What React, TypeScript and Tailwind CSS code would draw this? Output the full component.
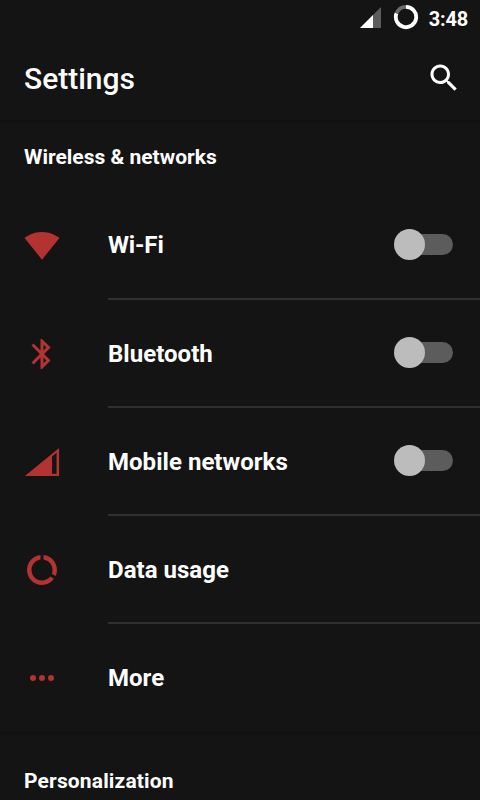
import type { ReactNode } from "react";

interface SettingsItem {
  label: string;
  icon: ReactNode;
  toggle?: boolean;
}

const items: SettingsItem[] = [
  {
    label: "Wi-Fi",
    toggle: true,
    icon: <path d="M12.01 21.1L23.64 6.6c-.45-.34-4.93-4-11.64-4C5.28 2.6.81 6.26.36 6.6l11.63 14.49.01.01.01-.01z" />,
  },
  {
    label: "Bluetooth",
    toggle: true,
    icon: (
      <path d="M17.71 7.71L12 2h-1v7.59L6.41 5 5 6.41 10.59 12 5 17.59 6.41 19 11 14.41V22h1l5.71-5.71-4.3-4.29 4.3-4.29zM13 5.83l1.88 1.88L13 9.59V5.83zm1.88 10.46L13 18.17v-3.76l1.88 1.88z" />
    ),
  },
  {
    label: "Mobile networks",
    toggle: true,
    icon: <path fillRule="evenodd" d="M.6 21.4L23.4 2.6v18.8zM18.7 8.3v11.6h3V5.8z" />,
  },
  {
    label: "Data usage",
    icon: (
      <path d="M13 2.05v3.03c3.39.49 6 3.39 6 6.92 0 .9-.18 1.75-.48 2.54l2.6 1.53c.56-1.24.88-2.62.88-4.07 0-5.18-3.95-9.45-9-9.95zM12 19c-3.87 0-7-3.13-7-7 0-3.53 2.61-6.43 6-6.92V2.05c-5.06.5-9 4.76-9 9.95 0 5.52 4.47 10 9.99 10 3.31 0 6.24-1.61 8.06-4.09l-2.6-1.53C16.17 17.98 14.21 19 12 19z" />
    ),
  },
  {
    label: "More",
    icon: (
      <>
        <circle cx="6" cy="12" r="2" />
        <circle cx="12" cy="12" r="2" />
        <circle cx="18" cy="12" r="2" />
      </>
    ),
  },
];

function StatusBar() {
  return (
    <div className="flex h-9 items-start justify-end pr-3">
      <svg className="mt-[7px] h-[21px] w-[21px]" viewBox="0 0 21 21">
        <path d="M0 21L21 0v21z" fill="#5c5c5c" />
        <path d="M0 21L13 8v13z" fill="#fff" />
      </svg>
      <svg className="ml-3 mt-1 h-[26px] w-[26px]" viewBox="0 0 26 26" fill="none" strokeWidth="3.8">
        <path d="M13 2.8A10.2 10.2 0 1 1 3.5 9.3" stroke="#fff" />
        <path d="M3.5 9.3A10.2 10.2 0 0 1 13 2.8" stroke="#6b6b6b" />
      </svg>
      <span className="ml-2.5 mt-[7px] text-[20px] font-bold leading-6 tracking-[-0.2px]">3:48</span>
    </div>
  );
}

function Toggle() {
  return (
    <span className="mb-px flex h-[31px] w-[59px] items-center">
      <span className="z-10 h-[31px] w-[31px] shrink-0 rounded-full bg-[#bcbcbc]" />
      <span className="-ml-4 h-[21px] flex-1 rounded-r-full bg-[#5c5c5c]" />
    </span>
  );
}

function Row({ item, first, last }: { item: SettingsItem; first: boolean; last: boolean }) {
  return (
    <div className="flex h-[108px] pl-6">
      <div className="flex w-[84px] items-center">
        <svg className="h-9 w-9" viewBox="0 0 24 24" fill="#b33232">
          {item.icon}
        </svg>
      </div>
      <div
        className={`flex flex-1 items-center justify-between border-b-2 pr-[27px] ${
          last ? "border-transparent" : "border-[#303030]"
        }`}
      >
        <span className={`text-[24px] font-bold leading-8 ${first ? "tracking-[-0.15px]" : "pt-0.5 tracking-[0.03px]"}`}>
          {item.label}
        </span>
        {item.toggle && <Toggle />}
      </div>
    </div>
  );
}

export default function App() {
  return (
    <div className="h-[800px] w-[480px] overflow-hidden bg-[#141414] font-['Roboto',sans-serif] text-white">
      <StatusBar />
      <header className="flex h-[84px] items-center justify-between pl-6 pr-[18px]">
        <h1 className="pt-0.5 text-[30px] font-medium leading-9">Settings</h1>
        <svg className="h-9 w-9" viewBox="0 0 24 24" fill="#fff">
          <path d="M15.5 14h-.79l-.28-.27C15.41 12.59 16 11.11 16 9.5 16 5.91 13.09 3 9.5 3S3 5.91 3 9.5 5.91 16 9.5 16c1.61 0 3.09-.59 4.23-1.57l.27.28v.79l5 4.99L20.49 19l-4.99-5zm-6 0C7.01 14 5 11.99 5 9.5S7.01 5 9.5 5 14 7.01 14 9.5 11.99 14 9.5 14z" />
        </svg>
      </header>
      <div className="h-1 bg-linear-to-b from-[#101010] to-[#141414]" />

      <h2 className="flex h-[68px] items-start pl-6 pt-5 text-[21px] font-bold leading-[26px]">
        Wireless &amp; networks
      </h2>
      {items.map((item, i) => (
        <Row key={item.label} item={item} first={i === 0} last={i === items.length - 1} />
      ))}

      <div className="h-1 bg-linear-to-b from-[#101010] to-[#141414]" />
      <h2 className="pl-6 pt-8 text-[21px] font-bold leading-[26px] tracking-[0.15px]">Personalization</h2>
    </div>
  );
}
